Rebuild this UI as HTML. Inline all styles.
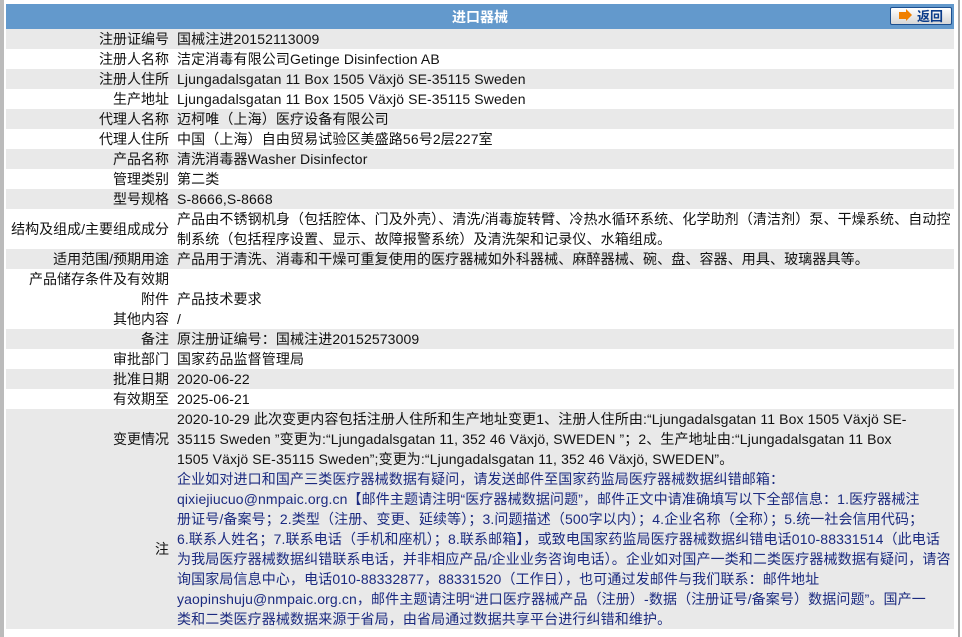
<!DOCTYPE html>
<html><head><meta charset="utf-8"><style>
body{margin:0;background:#fff;width:962px;height:637px;overflow:hidden;position:relative;font-family:"Liberation Sans","Noto Sans CJK SC",sans-serif;font-size:14px;color:#111}
.lb{position:absolute;left:0;top:0;width:4px;height:637px;background:#bbb}
.rb{position:absolute;left:958px;top:0;width:2px;height:637px;background:#aaa}
table{position:absolute;left:6px;top:4px;width:948px;border-collapse:collapse;table-layout:fixed}
td{padding:0;line-height:20px;vertical-align:middle;white-space:nowrap;overflow:hidden;letter-spacing:0.12px}
td.k{text-align:right;padding-right:8px;letter-spacing:0}
tr.g{background:#e9e9e9}
tr.h td{background:#6399cc;height:25px;color:#fff;font-weight:bold;text-align:center;position:relative;letter-spacing:0}
.btn{position:absolute;right:2px;top:3px;width:62px;height:18px;border:1px solid #1c4f8f;border-radius:2px;background:linear-gradient(#fff,#d6d6d6);color:#0b3c8a;font-weight:bold;font-size:13px;line-height:18px;text-align:right;padding-right:8px;box-sizing:border-box}
.btn i{position:absolute;left:8px;top:4px;width:7px;height:7px;background:#f08000}
.btn i:after{content:"";position:absolute;left:7px;top:-3px;border-left:6px solid #f08000;border-top:6.5px solid transparent;border-bottom:6.5px solid transparent}
.n{color:#1b2a80}
</style></head><body>
<div class="lb"></div><div class="rb"></div>
<table>
<colgroup><col style="width:171px"><col style="width:777px"></colgroup>
<tr class="h"><td colspan="2">进口器械<span class="btn"><i></i>返回</span></td></tr>
<tr class="g"><td class="k">注册证编号</td><td class="v">国械注进20152113009</td></tr>
<tr><td class="k">注册人名称</td><td class="v">洁定消毒有限公司Getinge Disinfection AB</td></tr>
<tr class="g"><td class="k">注册人住所</td><td class="v">Ljungadalsgatan 11 Box 1505 Växjö SE-35115 Sweden</td></tr>
<tr><td class="k">生产地址</td><td class="v">Ljungadalsgatan 11 Box 1505 Växjö SE-35115 Sweden</td></tr>
<tr class="g"><td class="k">代理人名称</td><td class="v">迈柯唯（上海）医疗设备有限公司</td></tr>
<tr><td class="k">代理人住所</td><td class="v">中国（上海）自由贸易试验区美盛路56号2层227室</td></tr>
<tr class="g"><td class="k">产品名称</td><td class="v">清洗消毒器Washer Disinfector</td></tr>
<tr><td class="k">管理类别</td><td class="v">第二类</td></tr>
<tr class="g"><td class="k">型号规格</td><td class="v">S-8666,S-8668</td></tr>
<tr><td class="k">结构及组成/主要组成成分</td><td class="v">产品由不锈钢机身（包括腔体、门及外壳）、清洗/消毒旋转臂、冷热水循环系统、化学助剂（清洁剂）泵、干燥系统、自动控<br>制系统（包括程序设置、显示、故障报警系统）及清洗架和记录仪、水箱组成。</td></tr>
<tr class="g"><td class="k">适用范围/预期用途</td><td class="v">产品用于清洗、消毒和干燥可重复使用的医疗器械如外科器械、麻醉器械、碗、盘、容器、用具、玻璃器具等。</td></tr>
<tr><td class="k">产品储存条件及有效期</td><td class="v"></td></tr>
<tr><td class="k">附件</td><td class="v">产品技术要求</td></tr>
<tr><td class="k">其他内容</td><td class="v">/</td></tr>
<tr class="g"><td class="k">备注</td><td class="v">原注册证编号：国械注进20152573009</td></tr>
<tr><td class="k">审批部门</td><td class="v">国家药品监督管理局</td></tr>
<tr class="g"><td class="k">批准日期</td><td class="v">2020-06-22</td></tr>
<tr><td class="k">有效期至</td><td class="v">2025-06-21</td></tr>
<tr class="g"><td class="k">变更情况</td><td class="v">2020-10-29 此次变更内容包括注册人住所和生产地址变更1、注册人住所由:“Ljungadalsgatan 11 Box 1505 Växjö SE-<br>35115 Sweden ”变更为:“Ljungadalsgatan 11, 352 46 Växjö, SWEDEN ”；2、生产地址由:“Ljungadalsgatan 11 Box<br>1505 Växjö SE-35115 Sweden”;变更为:“Ljungadalsgatan 11, 352 46 Växjö, SWEDEN”。</td></tr>
<tr class="g"><td class="k">注</td><td class="v n">企业如对进口和国产三类医疗器械数据有疑问，请发送邮件至国家药监局医疗器械数据纠错邮箱：<br>qixiejiucuo@nmpaic.org.cn【邮件主题请注明“医疗器械数据问题”，邮件正文中请准确填写以下全部信息：1.医疗器械注<br>册证号/备案号；2.类型（注册、变更、延续等）；3.问题描述（500字以内）；4.企业名称（全称）；5.统一社会信用代码；<br>6.联系人姓名；7.联系电话（手机和座机）；8.联系邮箱】，或致电国家药监局医疗器械数据纠错电话010-88331514（此电话<br>为我局医疗器械数据纠错联系电话，并非相应产品/企业业务咨询电话）。企业如对国产一类和二类医疗器械数据有疑问，请咨<br>询国家局信息中心，电话010-88332877，88331520（工作日），也可通过发邮件与我们联系：邮件地址<br>yaopinshuju@nmpaic.org.cn，邮件主题请注明“进口医疗器械产品（注册）-数据（注册证号/备案号）数据问题”。国产一<br>类和二类医疗器械数据来源于省局，由省局通过数据共享平台进行纠错和维护。</td></tr>
</table>
</body></html>
